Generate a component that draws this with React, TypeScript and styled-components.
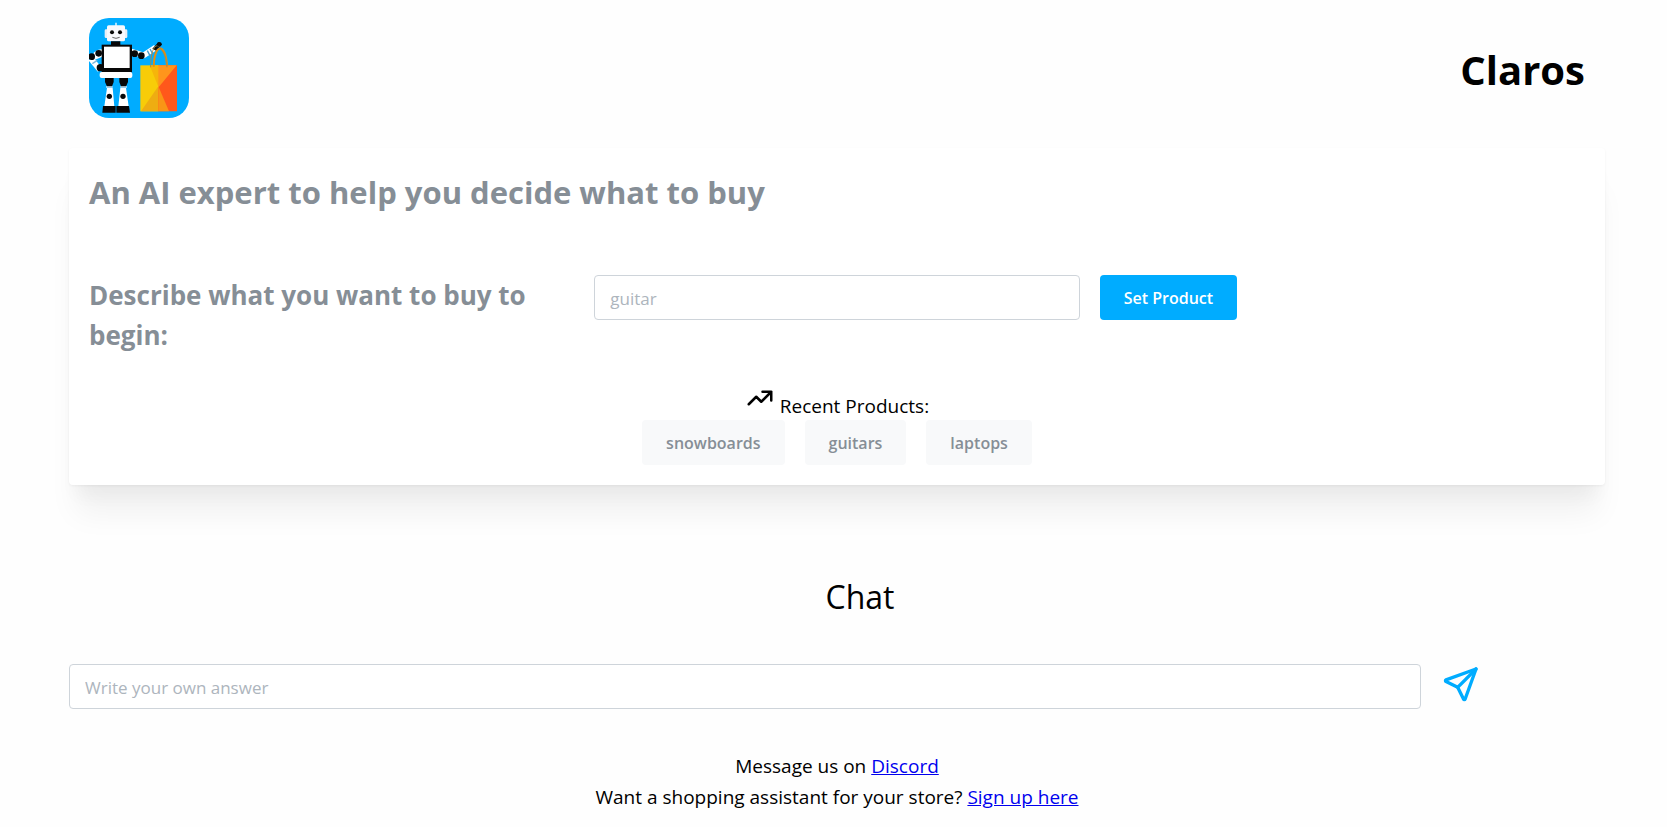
import React from "react";
import styled, { createGlobalStyle } from "styled-components";

const GlobalStyle = createGlobalStyle`
  *, *::before, *::after { box-sizing: border-box; }
  body {
    margin: 0;
    background: #fefefe;
    color: #000;
    font-family: "Segoe UI", "Open Sans", "Noto Sans", sans-serif;
    font-size: 19px;
    line-height: 31px;
  }
  h1, h2, h3, p { margin: 0; }
`;

const Page = styled.div`
  padding: 18px 62px 16px 69px;
`;

const Header = styled.header`
  display: flex;
  align-items: center;
  justify-content: space-between;
  padding: 0 20px;
`;

const Logo = styled.svg`
  display: block;
  width: 100px;
  height: 100px;
`;

const Brand = styled.h1`
  padding-top: 4px;
  font-size: 40px;
  line-height: 52px;
  font-weight: 700;
`;

const Card = styled.section`
  margin-top: 30px;
  padding: 20px;
  border-radius: 4px;
  background: #fff;
  box-shadow:
    0 1px 3px rgba(0, 0, 0, 0.05),
    0 36px 28px -7px rgba(0, 0, 0, 0.05),
    0 17px 17px -7px rgba(0, 0, 0, 0.04);
`;

const Tagline = styled.h2`
  color: #868e96;
  font-size: 31px;
  line-height: 48px;
  font-weight: 700;
`;

const ProductForm = styled.form`
  display: grid;
  grid-template-columns: repeat(3, 1fr);
  column-gap: 20px;
  align-items: start;
  margin-top: 59px;
`;

const Prompt = styled.label`
  color: #868e96;
  font-size: 26px;
  line-height: 40px;
  font-weight: 700;
`;

const TextField = styled.input`
  width: 100%;
  height: 45px;
  padding: 2px 15px 0;
  border: 1px solid #ced4da;
  border-radius: 4px;
  background: #fff;
  color: #000;
  font: inherit;
  font-size: 17px;

  &::placeholder {
    color: #adb5bd;
    opacity: 1;
  }
`;

const Button = styled.button<{ $tone: "primary" | "subtle" }>`
  justify-self: start;
  height: 45px;
  padding: 2px 24px 0;
  border: 0;
  border-radius: 4px;
  background: ${(p) => (p.$tone === "primary" ? "#00acff" : "#f8f9fa")};
  color: ${(p) => (p.$tone === "primary" ? "#fff" : "#868e96")};
  font: inherit;
  font-size: 16px;
  font-weight: 600;
  cursor: pointer;
`;

const Recent = styled.div`
  margin-top: 28px;
  text-align: center;
`;

const RecentLabel = styled.p`
  line-height: 28px;
`;

const TrendIcon = styled.svg`
  width: 30px;
  height: 30px;
`;

const Chips = styled.div`
  display: flex;
  justify-content: center;
  gap: 20px;
`;

const ChatTitle = styled.h2`
  margin-top: 88px;
  padding-left: 3%;
  font-size: 32px;
  line-height: 48px;
  font-weight: 400;
  text-align: center;
`;

const ChatForm = styled.form`
  display: flex;
  gap: 20px;
  margin-top: 43px;
`;

const ChatField = styled.div`
  width: 88%;
`;

const SendButton = styled.button`
  height: 40px;
  padding: 0;
  border: 0;
  background: none;
  color: #00acff;
  cursor: pointer;

  svg {
    display: block;
    width: 40px;
    height: 40px;
  }
`;

const Footer = styled.footer`
  margin-top: 42px;
  text-align: center;

  a { color: #0000ee; }
`;

function RobotLogo() {
  return (
    <Logo viewBox="0 0 300 300" role="img" aria-label="Claros logo">
      <defs>
        <clipPath id="tile">
          <rect width="300" height="300" rx="60" />
        </clipPath>
      </defs>
      <g clipPath="url(#tile)">
        <rect width="300" height="300" fill="#00acff" />
        {/* head */}
        <path d="M81 14v12" stroke="#fff" strokeWidth="4" />
        <rect x="47" y="34" width="10" height="26" rx="4" fill="#e9eef5" />
        <rect x="105" y="34" width="10" height="26" rx="4" fill="#e9eef5" />
        <rect x="54" y="22" width="54" height="48" rx="5" fill="#f8f9fd" />
        <circle cx="69" cy="43" r="6" fill="#080808" />
        <circle cx="93" cy="43" r="6" fill="#080808" />
        <path d="M70 58q11 6 22 0" fill="none" stroke="#666" strokeWidth="3" />
        <path d="M66 70h28v14H66z" fill="#080808" />
        {/* left arm */}
        <path d="M14 104q14-12 26-10v22l-24 10z" fill="#fff" />
        <path d="M5 122l28 34" stroke="#fff" strokeWidth="17" />
        <path d="M10 137l15-10" stroke="#7db7dd" strokeWidth="4" />
        <circle cx="29" cy="106" r="10" fill="#080808" />
        <circle cx="8" cy="116" r="10" fill="#080808" />
        <circle cx="34" cy="149" r="11" fill="#080808" />
        {/* right arm */}
        <path d="M126 100l38 12 36-24" fill="none" stroke="#fff" strokeWidth="17" strokeLinejoin="round" />
        <path d="M175 98l9 17M183 93l9 16" stroke="#479dcc" strokeWidth="4" />
        <circle cx="137" cy="107" r="10" fill="#080808" />
        <circle cx="157" cy="113" r="10" fill="#080808" />
        <path d="M190 92l18-19 11 5-18 20z" fill="#080808" />
        {/* torso */}
        <rect x="38" y="80" width="91" height="83" fill="#080808" />
        <rect x="45" y="86" width="77" height="64" fill="#fff" />
        <rect x="32" y="162" width="98" height="18" rx="6" fill="#fff" />
        {/* legs */}
        <path d="M48 180h26v12l-6 16H55l-7-16zM91 180h26v12l-7 16H97l-6-16z" fill="#080808" />
        <path d="M54 210h17l5 55H46zM94 210h17l8 55H88z" fill="#fff" />
        <path d="M51 207h20M94 207h20" stroke="#cfe5f3" strokeWidth="4" />
        <circle cx="61" cy="235" r="8" fill="#080808" />
        <circle cx="102" cy="235" r="8" fill="#080808" />
        <path d="M42 264h38v20H40zM82 264h38l3 20H82z" fill="#080808" />
        {/* shopping bag */}
        <rect x="154" y="142" width="54" height="138" fill="#f8cc08" />
        <path d="M207 142h57v138h-57z" fill="#ff581b" />
        <path d="M207 142h56l-56 68z" fill="#ff951c" />
        <path d="M182 142h26v64z" fill="#f6b50a" />
        <path d="M208 205l-52 75h52z" fill="#eead12" />
        <path d="M208 205l32 75h-32z" fill="#f99516" />
        <path d="M194 146c2-72 36-72 40-3" fill="none" stroke="#e28e12" strokeWidth="6" />
        <path d="M185 148c0-64 20-74 29-58 8 12 18 22 20 58" fill="none" stroke="#a88a48" strokeWidth="3" />
        <circle cx="211" cy="79" r="7" fill="#080808" />
      </g>
    </Logo>
  );
}

const recentProducts = ["snowboards", "guitars", "laptops"];

export default function App() {
  const stop = (e: React.FormEvent) => e.preventDefault();

  return (
    <>
      <GlobalStyle />
      <Page>
        <Header>
          <RobotLogo />
          <Brand>Claros</Brand>
        </Header>

        <Card>
          <Tagline>An AI expert to help you decide what to buy</Tagline>
          <ProductForm onSubmit={stop}>
            <Prompt htmlFor="product">Describe what you want to buy to begin:</Prompt>
            <TextField id="product" type="text" placeholder="guitar" />
            <Button type="submit" $tone="primary">Set Product</Button>
          </ProductForm>
          <Recent>
            <RecentLabel>
              <TrendIcon viewBox="0 0 24 24" fill="none" stroke="currentColor" strokeWidth="2" strokeLinecap="round" strokeLinejoin="round" aria-hidden="true">
                <path d="M3 17l6-6 4 4 8-8M14 7h7v7" />
              </TrendIcon>{" "}
              Recent Products:
            </RecentLabel>
            <Chips>
              {recentProducts.map((name) => (
                <Button key={name} type="button" $tone="subtle">{name}</Button>
              ))}
            </Chips>
          </Recent>
        </Card>

        <ChatTitle>Chat</ChatTitle>
        <ChatForm onSubmit={stop}>
          <ChatField>
            <TextField type="text" placeholder="Write your own answer" aria-label="Write your own answer" />
          </ChatField>
          <SendButton type="submit" aria-label="Send">
            <svg viewBox="0 0 24 24" fill="none" stroke="currentColor" strokeWidth="2" strokeLinecap="round" strokeLinejoin="round" aria-hidden="true">
              <path d="M10 14L21 3" />
              <path d="M21 3l-6.5 18a.55.55 0 0 1-1 0L10 14l-7-3.500a.55.55 0 0 1 0-1L21 3" />
            </svg>
          </SendButton>
        </ChatForm>

        <Footer>
          <p>Message us on <a href="#discord">Discord</a></p>
          <p>Want a shopping assistant for your store? <a href="#signup">Sign up here</a></p>
        </Footer>
      </Page>
    </>
  );
}
